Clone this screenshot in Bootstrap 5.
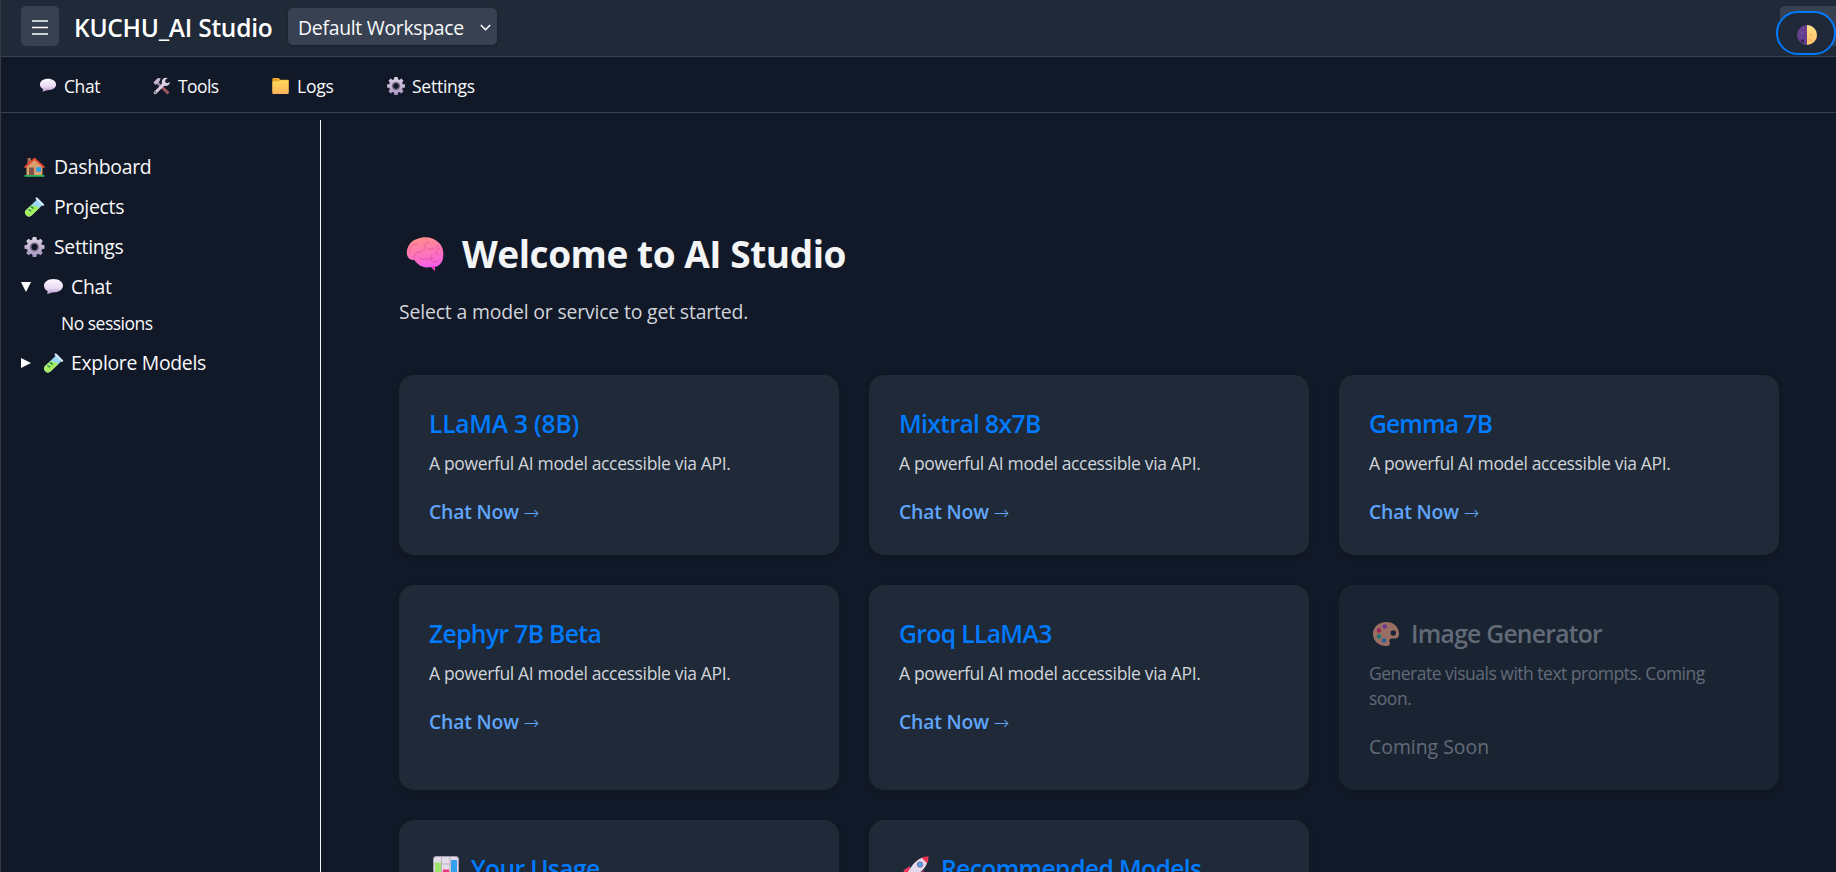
<!DOCTYPE html>
<html lang="en" data-bs-theme="dark">
<head>
<meta charset="utf-8">
<meta name="viewport" content="width=device-width, initial-scale=1">
<title>KUCHU_AI Studio</title>
<link rel="stylesheet" href="https://cdn.jsdelivr.net/npm/bootstrap@5.3.0/dist/css/bootstrap.min.css">
<style>
body{background:#111827;color:#f9fafb;font-family:"Open Sans","Noto Sans",sans-serif;font-size:19.4px;line-height:30px;height:872px;overflow:hidden;border-left:1px solid #343a40}
.topbar{height:57px;background:#1f2937;border-bottom:1px solid #374151;padding-left:20px}
.menu-btn{width:38px;height:40px;margin-top:6px;background:#374151;border-radius:5px;border:0;padding:3px 0 0}
.brand{font-size:24.5px;font-weight:600;line-height:34px;margin:11px 0 0 15px;width:199px;color:#fff;white-space:nowrap;letter-spacing:-.25px}
.workspace{width:209px;height:37px;margin:8px 0 0 15px;padding:2px 6px 0 10px;background:#374151;border-radius:5px;box-shadow:0 1px 3px #0004;white-space:nowrap;letter-spacing:-.28px}
.theme-slot{width:56px;height:40px;margin-top:6px;background:#374151;border-radius:5px 0 0 5px}
.theme-btn{left:-4px;top:5px;width:60px;height:44px;border:2px solid #007bff;border-radius:22px;background:#1f2937;padding:0}
.theme-btn svg{margin:4px 0 0 2px}
.tabs{height:56px;border-bottom:1px solid #374151;padding:2px 0 0 38px;font-size:17.5px}
.tabs a{color:inherit;text-decoration:none;white-space:nowrap;display:flex;align-items:center;gap:7px;letter-spacing:-.25px}
.tabs .tab-chat{width:113px;letter-spacing:-.4px}.tabs .tab-tools{width:119px;letter-spacing:-.6px}.tab-logs{width:116px}
.side{width:320px;height:752px;margin-top:7px;padding:27px 0 0 23px;border-right:1px solid #f3f4f6;white-space:nowrap;letter-spacing:-.3px}
.entry{height:40px;display:flex;align-items:center;gap:9px}
.entry.branch{margin-left:-3px;gap:7.5px}
.entry.session{height:36px;padding:0 0 5px 37px;font-size:17.5px;letter-spacing:-.5px}
.main-area{padding:116px 0 0 78px;min-width:0}
h1{font-size:37px;font-weight:700;color:#f3f4f6;line-height:50px;white-space:nowrap;letter-spacing:-.45px;padding:0 0 0 7px;margin:0 0 18px}
h1 svg{margin-right:18px}
.subtitle{color:#d1d5db;white-space:nowrap;letter-spacing:-.16px;margin-bottom:48px}
.tiles{display:grid;grid-template-columns:repeat(3,440px);grid-template-rows:180px 205px 205px;gap:30px}
.tile{background:#1f2937;border-radius:15px;padding:30px;box-shadow:0 2px 5px #0000001a}
.tile h2{font-size:24.7px;font-weight:600;color:#007bff;line-height:37px;margin:0 0 9px;white-space:nowrap;letter-spacing:-.65px;display:flex;align-items:center}
.tile h2 svg{margin:0 12px 0 4px}
.tile p{font-size:17.5px;line-height:25px;color:#d1d5db;margin:0 0 21px;letter-spacing:-.35px}
.tile a{display:block;color:#60a5fa;font-weight:600;text-decoration:none;letter-spacing:-.2px}
.go{font:200 18.5px/1 "DejaVu Sans",sans-serif}
.tile.soon{opacity:.7}
.tile.soon h2,.tile.soon p,.tile.soon div{color:#858d9a}
.tile.soon h2{letter-spacing:-.75px}
.tile.soon p{letter-spacing:-.5px}
.tile h2.wide{letter-spacing:-.27px}
.tile h2.tight{letter-spacing:-.9px}
.soon svg{opacity:.8}
svg{flex:none;display:block}
</style>
</head>
<body>
<svg width="0" height="0" class="position-absolute" aria-hidden="true">
<defs>
<linearGradient id="gBubble" x2="0" y2="1"><stop stop-color="#fbf5ff"/><stop offset=".6" stop-color="#e9dcf3"/><stop offset="1" stop-color="#b79bd0"/></linearGradient>
<linearGradient id="gGear" x2="0" y2="1"><stop stop-color="#ddd3e6"/><stop offset="1" stop-color="#a795c0"/></linearGradient>
<linearGradient id="gFolder" x2="0" y2="1"><stop stop-color="#ffd95c"/><stop offset="1" stop-color="#f9b25b"/></linearGradient>
<linearGradient id="gBrain" x2=".2" y2="1"><stop stop-color="#ff9385"/><stop offset=".5" stop-color="#ff78b4"/><stop offset="1" stop-color="#f65ceb"/></linearGradient>
<linearGradient id="gMoon" x2="0" y2="1"><stop stop-color="#ffe08a"/><stop offset="1" stop-color="#ffbf63"/></linearGradient>
<symbol id="bubble" viewBox="0 0 20 20"><path d="M10 2C4.500 2 .5 4.800.5 8.800c0 2.500 1.500 4.400 3.700 5.500-.1 1.100-.6 2-.6 2.500.1.500 3.200-.300 4.700-1.300C15 16 19.500 12.700 19.500 8.800S15.500 2 10 2Z" fill="url(#gBubble)"/></symbol>
<symbol id="gear" viewBox="0 0 20 20"><path fill="url(#gGear)" fill-rule="evenodd" d="M8.200 0h3.600l.5 2.600 1.400.6 2.200-1.500 2.400 2.400-1.500 2.200.6 1.400 2.600.5v3.600l-2.600.5-.6 1.400 1.500 2.200-2.400 2.400-2.200-1.500-1.400.6-.5 2.600H8.200l-.5-2.600-1.400-.6-2.200 1.500-2.400-2.400 1.500-2.200-.6-1.400L0 11.800V8.200l2.600-.5.600-1.400-1.500-2.200 2.400-2.400 2.200 1.500 1.400-.6ZM10 6.700a3.300 3.300 0 1 0 0 6.600 3.300 3.300 0 0 0 0-6.600Z"/><circle cx="10" cy="10" r="3.900" fill="none" stroke="#746682" stroke-width="1.200"/></symbol>
<symbol id="folder" viewBox="0 0 20 20"><path d="M1 2q0-1 1-1h6l2 2h8q1 0 1 1v13H1Z" fill="#e9a629"/><path d="M1 5h7l2-1.500h9V18q0 1-1 1H2q-1 0-1-1Z" fill="url(#gFolder)"/></symbol>
<symbol id="tools" viewBox="0 0 20 20"><path d="m6 5 13 12-2.500 2.500L4.500 7.500Z" fill="#9b595e"/><path d="m6 5 5 4.500-2.500 2.500-4-4.500Z" fill="#8d7d9e"/><path d="M1 6 5.500 1.500 9 1 8 4.500 3.500 9Z" fill="#c5b8d2"/><path d="M13 7.500 3 17.500" stroke="#d9cfe3" stroke-width="3.400" stroke-linecap="round"/><path d="M17 1.500a4.500 4.500 0 1 0 2.300 4l-3 1.500-2.200-1.300.2-2.700Z" fill="#ddd2e6"/><circle cx="3.300" cy="17" r="1" fill="#57486d"/></symbol>
<symbol id="house" viewBox="0 0 20 20"><path d="M3 1h3.500v7H3Z" fill="#a5694c"/><path d="M2 9 10 2l8 7v9.500H2Z" fill="#d9a071"/><path d="M.8 10 10 1.800 19.200 10" fill="none" stroke="#e6492f" stroke-width="2" stroke-linecap="round"/><path d="M4.500 10.500h5v8h-5Z" fill="#845047"/><path d="M11.800 10.200h4.700v4.500h-4.700Z" fill="#279eec"/><path d="M0 18h20v1.800H0Z" fill="#27b45c"/></symbol>
<symbol id="tube" viewBox="0 0 20 20"><path d="m12.500 2.500 5.500 5.500L7 18.500a3.900 3.900 0 0 1-5.500-5.500Z" fill="#9bd5f8"/><path d="m7.200 8 8 2.700L7 18.500a3.900 3.900 0 0 1-5.500-5.500Z" fill="#a5ec61"/><path d="M3 14.300 8 9.700" stroke="#d5ff94" stroke-width="1.500"/><path d="m12.200 1.500 6.300 6.300" stroke="#d5edff" stroke-width="2.300" stroke-linecap="round"/><path d="m7 10 1.500 1M4.500 13l1.500.5" stroke="#289447" stroke-width="1.800" stroke-linecap="round"/></symbol>
<symbol id="brain" viewBox="0 0 38 34"><path d="M1 18C0 11 4 4 11 2 18-1 27 0 32 5c5 4 6 10 5 16-.8 5-4 8-8 9v4l-4-4c-5 1-10 0-13-3-2-2-3-3-4-4-4 0-6-2-7-5Z" fill="url(#gBrain)"/><path d="M25 29h4v4.500Z" fill="#ee34bd"/><g fill="none" stroke="#d84b95" stroke-width="1" stroke-opacity=".65" stroke-linecap="round"><path d="M4 15C3 10 7 6 11 7M8 22c-1-4 2-7 6-7 3-1 5-3 5-6 0-3 3-5 5-3M22 12c5 1 8-1 10-4M34 11c-4 1-5 5-2 7M14 21c5 3 9-1 14 1M24 22c1 3 6 4 9 1M26 18l-1 4"/></g></symbol>
<symbol id="palette" viewBox="0 0 26 24"><path fill-rule="evenodd" d="M13 0C5.500 0 0 5 0 12s5.800 12 13 12c3.300 0 4.500-1.500 3.600-4-.8-2 0-3.500 2.400-3.500h3c2.600 0 4-2 4-4.500C26 4.500 20.500 0 13 0Zm7.300 8.300a2.700 2.700 0 1 1 0 5.400 2.700 2.700 0 0 1 0-5.400Z" fill="#ffb08e"/><circle cx="11.700" cy="4.500" r="2.200" fill="#b34be0"/><circle cx="6" cy="8.500" r="2.200" fill="#f6267c"/><circle cx="6" cy="14.500" r="2.200" fill="#22bfb4"/><circle cx="11" cy="18.500" r="2.200" fill="#3b91f7"/></symbol>
<symbol id="chart" viewBox="0 0 26 26"><rect x=".5" y=".5" width="25" height="25" rx="2.500" fill="#e4dce9" stroke="#a79cae"/><path d="M8.500 1v24M17 1v24M1 8h24M1 16h24" stroke="#b8adbf"/><path d="M2 6.500h6V25H2Z" fill="#9be66b"/><path d="M10 13.500h6V25h-6Z" fill="#e83878"/><path d="M18 4h6v21h-6Z" fill="#35a0ee"/></symbol>
<symbol id="rocket" viewBox="0 0 26 26"><path d="m7 10-6 4-1 4 7-1ZM15 19l-1 6 4-2 3-9Z" fill="#f33960"/><path d="M25 1c-8 0-14 4-20 15l5 5C21 15 25 9 25 1Z" fill="#e6dbed"/><path d="M25.500.500c-3 0-5 .4-7 1.300l5.500 5.500c1-2 1.500-4 1.500-6.800Z" fill="#f0344f"/><circle cx="17" cy="8.500" r="3.100" fill="#8170a8"/><circle cx="17" cy="8.500" r="2" fill="#48aaf3"/><path d="m4 19-3 6 6-3Z" fill="#ffc34d"/></symbol>
<symbol id="moon" viewBox="0 0 20 20"><circle cx="10" cy="10" r="10" fill="#65408e"/><path d="M10 0a10 10 0 0 1 0 20Z" fill="url(#gMoon)"/><circle cx="5.500" cy="16" r="1.800" fill="#35204f"/><circle cx="5" cy="8" r="1.500" fill="#74509b"/><circle cx="14" cy="10" r="1.300" fill="#f3b95f"/><circle cx="13" cy="15" r="1" fill="#f0ad5d"/></symbol>
</defs>
</svg>

<header class="topbar d-flex align-items-start">
  <button class="menu-btn d-flex align-items-center justify-content-center" aria-label="Menu"><svg width="16" height="15" viewBox="0 0 16 15"><path d="M0 1h16M0 7.500h16M0 14h16" stroke="#fff" stroke-width="1.600"/></svg></button>
  <div class="brand">KUCHU_AI Studio</div>
  <div class="workspace d-flex align-items-center justify-content-between" role="button">Default Workspace<svg width="11" height="8" viewBox="0 0 11 8"><path d="m.8 1 4.700 4.700L10.200 1" fill="none" stroke="#fff" stroke-width="1.600"/></svg></div>
  <div class="theme-slot position-relative ms-auto">
    <button class="theme-btn position-absolute d-flex align-items-center justify-content-center" aria-label="Theme"><svg width="20" height="20"><use href="#moon"/></svg></button>
  </div>
</header>

<nav class="tabs d-flex">
  <a href="#" class="tab-chat"><svg width="18" height="17"><use href="#bubble"/></svg>Chat</a>
  <a href="#" class="tab-tools"><svg width="19" height="18"><use href="#tools"/></svg>Tools</a>
  <a href="#" class="tab-logs"><svg width="19" height="18"><use href="#folder"/></svg>Logs</a>
  <a href="#"><svg width="18" height="18"><use href="#gear"/></svg>Settings</a>
</nav>

<div class="d-flex">
  <aside class="side flex-shrink-0">
    <div class="entry"><svg width="21" height="20"><use href="#house"/></svg>Dashboard</div>
    <div class="entry"><svg width="21" height="20"><use href="#tube"/></svg>Projects</div>
    <div class="entry"><svg width="21" height="20"><use href="#gear"/></svg>Settings</div>
    <div class="entry branch"><svg width="14" height="12" viewBox="0 0 14 12"><path d="M0 1h10L5 11Z" fill="#fff"/></svg><svg width="21" height="20"><use href="#bubble"/></svg>Chat</div>
    <div class="entry session">No sessions</div>
    <div class="entry branch"><svg width="14" height="12" viewBox="0 0 14 12"><path d="M0 1v10l10-5Z" fill="#fff"/></svg><svg width="21" height="20"><use href="#tube"/></svg>Explore Models</div>
  </aside>

  <main class="main-area">
    <h1 class="d-flex align-items-center"><svg width="38" height="34"><use href="#brain"/></svg>Welcome to AI Studio</h1>
    <div class="subtitle">Select a model or service to get started.</div>
    <div class="tiles">
      <div class="tile"><h2 class="wide">LLaMA 3 (8B)</h2><p>A powerful AI model accessible via API.</p><a href="#">Chat Now <span class="go">→</span></a></div>
      <div class="tile"><h2>Mixtral 8x7B</h2><p>A powerful AI model accessible via API.</p><a href="#">Chat Now <span class="go">→</span></a></div>
      <div class="tile"><h2 class="tight">Gemma 7B</h2><p>A powerful AI model accessible via API.</p><a href="#">Chat Now <span class="go">→</span></a></div>
      <div class="tile"><h2>Zephyr 7B Beta</h2><p>A powerful AI model accessible via API.</p><a href="#">Chat Now <span class="go">→</span></a></div>
      <div class="tile"><h2>Groq LLaMA3</h2><p>A powerful AI model accessible via API.</p><a href="#">Chat Now <span class="go">→</span></a></div>
      <div class="tile soon"><h2><svg width="26" height="24"><use href="#palette"/></svg>Image Generator</h2><p>Generate visuals with text prompts. Coming<br>soon.</p><div>Coming Soon</div></div>
      <div class="tile"><h2><svg width="26" height="26"><use href="#chart"/></svg>Your Usage</h2></div>
      <div class="tile"><h2><svg width="26" height="26"><use href="#rocket"/></svg>Recommended Models</h2></div>
    </div>
  </main>
</div>
<script src="https://cdn.jsdelivr.net/npm/bootstrap@5.3.0/dist/js/bootstrap.bundle.min.js"></script>
</body>
</html>
